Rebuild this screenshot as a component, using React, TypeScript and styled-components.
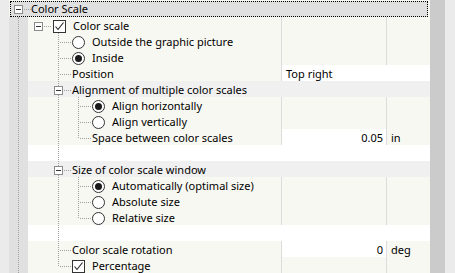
import React from "react";
import styled, { createGlobalStyle } from "styled-components";

const GlobalStyle = createGlobalStyle`
  html, body {
    margin: 0;
    padding: 0;
    background: #ebebeb;
  }
  body {
    font-family: "Noto Sans", "DejaVu Sans", sans-serif;
    font-size: 11px;
    color: #000;
  }
`;

type Seg = "space" | "pass" | "tee" | "last" | "teeBox" | "box";
type RowKind = "item" | "group" | "blank";

const DOT = "1 1";
const LINE = "#a0a0a0";

const segWidth = (s: Seg) => (s === "space" || s === "pass" ? 20 : 24);

// tree connector drawn for one indent column
const Connector = ({ seg }: { seg: Seg }) => {
  const w = segWidth(seg);
  const hasBox = seg === "teeBox" || seg === "box";
  return (
    <svg width={w} height={16} style={{ display: "block", flex: "none" }} shapeRendering="crispEdges">
      {(seg === "pass" || seg === "tee" || seg === "teeBox") && (
        <line x1={10.5} y1={0} x2={10.5} y2={16} stroke={LINE} strokeDasharray={DOT} />
      )}
      {seg === "last" && <line x1={10.5} y1={0} x2={10.5} y2={10} stroke={LINE} strokeDasharray={DOT} />}
      {(seg === "tee" || seg === "last") && (
        <line x1={12} y1={9.5} x2={23} y2={9.5} stroke={LINE} strokeDasharray={DOT} />
      )}
      {hasBox && (
        <>
          <rect x={6.5} y={5.5} width={8} height={8} fill="#fff" stroke="#8c8c8c" />
          <line x1={8} y1={9.5} x2={13} y2={9.5} stroke="#333" />
          <line x1={16} y1={9.5} x2={23} y2={9.5} stroke={LINE} strokeDasharray={DOT} />
        </>
      )}
    </svg>
  );
};

const Check = ({ checked, offset = 0 }: { checked?: boolean; offset?: number }) => (
  <CheckBox $offset={offset}>
    {checked && (
      <svg width={11} height={11} viewBox="0 0 11 11">
        <polyline points="1.5,5.5 4,8.5 9.5,1.5" fill="none" stroke="#222" strokeWidth={1.1} />
      </svg>
    )}
  </CheckBox>
);

const Radio = ({ checked }: { checked?: boolean }) => (
  <RadioCircle>{checked && <RadioDot />}</RadioCircle>
);

type RowProps = {
  segs: Seg[];
  kind?: RowKind;
  icon?: React.ReactNode;
  label?: string;
  value?: string;
  unit?: string;
  wide?: boolean;
  white?: boolean;
};

const Row = ({ segs, kind = "item", icon, label, value, unit, wide, white }: RowProps) => (
  <RowBox $kind={kind}>
    <LabelCell $full={kind !== "item"}>
      {segs.map((s, i) => (
        <Connector key={i} seg={s} />
      ))}
      {icon}
      {label && <Label $gap={icon ? 7 : 0}>{label}</Label>}
    </LabelCell>
    {kind === "item" &&
      (wide ? (
        <ValueCell $white $wide>
          {value}
        </ValueCell>
      ) : (
        <>
          <ValueCell $white={white} $right>
            {value}
          </ValueCell>
          <UnitCell>{unit}</UnitCell>
        </>
      ))}
  </RowBox>
);

export default function App() {
  return (
    <>
      <GlobalStyle />
      <Window>
        <Pane>
          <Header>
            <Connector seg="box" />
            <HeaderTitle>Color Scale</HeaderTitle>
          </Header>
          <Body>
            <Gutter>
              <GutterLine />
            </Gutter>
            <Rows>
              <Row segs={["box"]} icon={<Check checked offset={1} />} label="Color scale" />
              <Row segs={["space", "tee"]} icon={<Radio />} label="Outside the graphic picture" />
              <Row segs={["space", "tee"]} icon={<Radio checked />} label="Inside" />
              <Row segs={["space", "tee"]} label="Position" value="Top right" wide />
              <Row segs={["space", "teeBox"]} kind="group" label="Alignment of multiple color scales" />
              <Row segs={["space", "pass", "tee"]} icon={<Radio checked />} label="Align horizontally" />
              <Row segs={["space", "pass", "tee"]} icon={<Radio />} label="Align vertically" />
              <Row segs={["space", "pass", "last"]} label="Space between color scales" value="0.05" unit="in" white />
              <Row segs={["space", "pass"]} kind="blank" />
              <Row segs={["space", "teeBox"]} kind="group" label="Size of color scale window" />
              <Row segs={["space", "pass", "tee"]} icon={<Radio checked />} label="Automatically (optimal size)" />
              <Row segs={["space", "pass", "tee"]} icon={<Radio />} label="Absolute size" />
              <Row segs={["space", "pass", "last"]} icon={<Radio />} label="Relative size" />
              <Row segs={["space", "pass"]} kind="blank" />
              <Row segs={["space", "tee"]} label="Color scale rotation" value="0" unit="deg" white />
              <Row segs={["space", "last"]} icon={<Check checked />} label="Percentage" />
            </Rows>
          </Body>
        </Pane>
        <ScrollBar />
      </Window>
    </>
  );
}

const Window = styled.div`
  display: flex;
  width: 455px;
  height: 273px;
  overflow: hidden;
  background: #ebebeb;
`;

const Pane = styled.div`
  width: 421px;
  margin-left: 9px;
  display: flex;
  flex-direction: column;
  background: #f8f8f2;
`;

const Header = styled.div`
  box-sizing: border-box;
  height: 16px;
  margin: 1px 2px 0 1px;
  border: 1px dotted #000;
  background: #e0e0e0;
  display: flex;
  align-items: center;
  padding-left: 3px;
  svg {
    margin-top: -2px;
    margin-left: -6px;
  }
`;

const HeaderTitle = styled.span`
  line-height: 14px;
  margin-left: -1px;
  white-space: nowrap;
`;

const Body = styled.div`
  display: flex;
  flex: 1;
`;

const Gutter = styled.div`
  width: 19px;
  background: #e0e0e0;
  flex: none;
`;

const GutterLine = styled.div`
  margin-left: 9px;
  height: 100%;
  border-left: 1px dotted ${LINE};
`;

const Rows = styled.div`
  display: flex;
  flex-direction: column;
  width: 402px;
`;

const RowBox = styled.div<{ $kind: RowKind }>`
  display: flex;
  height: 16px;
  background: ${(p) => (p.$kind === "group" ? "#f0f0f0" : p.$kind === "blank" ? "#fff" : "#f8f8f2")};
`;

const LabelCell = styled.div<{ $full?: boolean }>`
  display: flex;
  align-items: center;
  width: ${(p) => (p.$full ? "402px" : "253px")};
  flex: none;
  overflow: hidden;
`;

const Label = styled.span<{ $gap: number }>`
  margin-left: ${(p) => p.$gap}px;
  padding-top: 2px;
  line-height: 14px;
  white-space: nowrap;
`;

const ValueCell = styled.div<{ $white?: boolean; $wide?: boolean; $right?: boolean }>`
  box-sizing: border-box;
  width: ${(p) => (p.$wide ? "149px" : "105px")};
  border-left: 1px solid #dcdcdc;
  background: ${(p) => (p.$white ? "#fff" : "transparent")};
  padding: 2px ${(p) => (p.$right ? "3px" : "0")} 0 ${(p) => (p.$right ? "0" : "4px")};
  text-align: ${(p) => (p.$right ? "right" : "left")};
  line-height: 14px;
  white-space: nowrap;
`;

const UnitCell = styled.div`
  box-sizing: border-box;
  width: 44px;
  border-left: 1px solid #dcdcdc;
  padding: 2px 0 0 4px;
  line-height: 14px;
`;

const CheckBox = styled.span<{ $offset: number }>`
  box-sizing: border-box;
  width: 13px;
  height: 13px;
  margin: 3px 0 0 ${(p) => p.$offset}px;
  border: 1px solid #333;
  background: #fff;
  flex: none;
  display: flex;
  align-items: center;
  justify-content: center;
`;

const RadioCircle = styled.span`
  box-sizing: border-box;
  width: 13px;
  height: 13px;
  margin-top: 3px;
  border: 1px solid #333;
  border-radius: 50%;
  background: #fff;
  flex: none;
  display: flex;
  align-items: center;
  justify-content: center;
`;

const RadioDot = styled.span`
  width: 7px;
  height: 7px;
  border-radius: 50%;
  background: #1a1a1a;
`;

const ScrollBar = styled.div`
  width: 15px;
  height: 100%;
  background: #cbcbcb;
  flex: none;
`;
